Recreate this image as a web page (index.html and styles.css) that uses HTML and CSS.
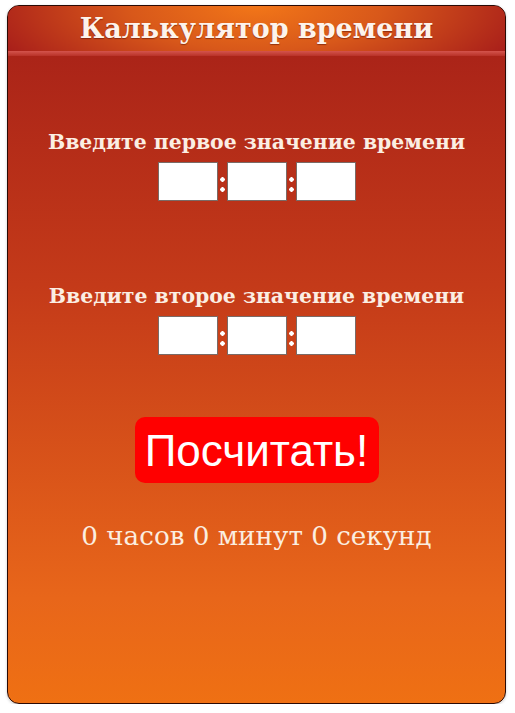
FILE: index.html
```
<!DOCTYPE html>
<html lang="ru">
<head>
<meta charset="utf-8">
<link rel="stylesheet" href="styles.css">
</head>
<body>
<div class="calc">
  <div class="head">Калькулятор времени</div>
  <div class="band"></div>
  <div class="group g1">
    <div class="label">Введите первое значение времени</div>
    <div class="fields">
      <input class="field" type="text"><span class="colon"></span><input class="field" type="text"><span class="colon"></span><input class="field" type="text">
    </div>
  </div>
  <div class="group g2">
    <div class="label">Введите второе значение времени</div>
    <div class="fields">
      <input class="field" type="text"><span class="colon"></span><input class="field" type="text"><span class="colon"></span><input class="field" type="text">
    </div>
  </div>
  <div class="btnwrap"><button class="btn">Посчитать!</button></div>
  <div class="result">0 часов 0 минут 0 секунд</div>
</div>
</body>
</html>
```
FILE: styles.css
```
html, body { margin: 0; padding: 0; background: #fff; }
body { padding: 5px 0 0 7px; }
.calc {
  width: 497px;
  height: 697px;
  border: 1px solid #2a0a04;
  border-radius: 12px;
  overflow: hidden;
  background: linear-gradient(to bottom, #a51f18 0%, #c43a19 40%, #e8661a 85%, #ef7013 100%);
  font-family: "DejaVu Serif", "Liberation Serif", serif;
  color: #fbeee3;
  box-shadow: 0 1px 3px rgba(0,0,0,0.2);
}
.head {
  height: 45px;
  display: flex;
  align-items: center;
  justify-content: center;
  background: radial-gradient(ellipse 280px 100px at 50% 0%, #f27618 0%, #d8581a 45%, #a81e1a 100%);
  font-weight: bold;
  font-size: 27px;
  color: #fdf3ec;
  text-shadow: 0 1px 1px rgba(80,10,0,0.5);
}
.band {
  height: 5px;
  background: linear-gradient(to bottom, #d4534c, #b83228);
}
.group { display: flex; flex-direction: column; align-items: center; }
.g1 { margin-top: 74px; }
.g2 { margin-top: 83px; }
.label {
  font-weight: bold;
  font-size: 20.4px;
  line-height: 24px;
  white-space: nowrap;
}
.fields { display: flex; align-items: center; margin-top: 8px; }
.field {
  width: 60px;
  height: 39px;
  box-sizing: border-box;
  border: 1px solid #7a6a66;
  background: #fff;
  margin: 0;
  padding: 0;
}
.colon {
  width: 9px;
  height: 15px;
  margin-top: 6px;
  background:
    radial-gradient(circle, #fff 2px, transparent 2.5px) center top / 9px 5px no-repeat,
    radial-gradient(circle, #fff 2px, transparent 2.5px) center bottom / 9px 5px no-repeat;
}
.btnwrap { display: flex; justify-content: center; margin-top: 62px; }
.btn {
  width: 244px;
  height: 66px;
  border: none;
  border-radius: 10px;
  background: #ff0000;
  color: #fff;
  font-family: "Liberation Sans", Arial, sans-serif;
  font-size: 44px;
  padding: 2px 0 0;
}
.result {
  text-align: center;
  margin-top: 38px;
  font-size: 26.2px;
  line-height: 30px;
  color: #fbeee0;
}
```
